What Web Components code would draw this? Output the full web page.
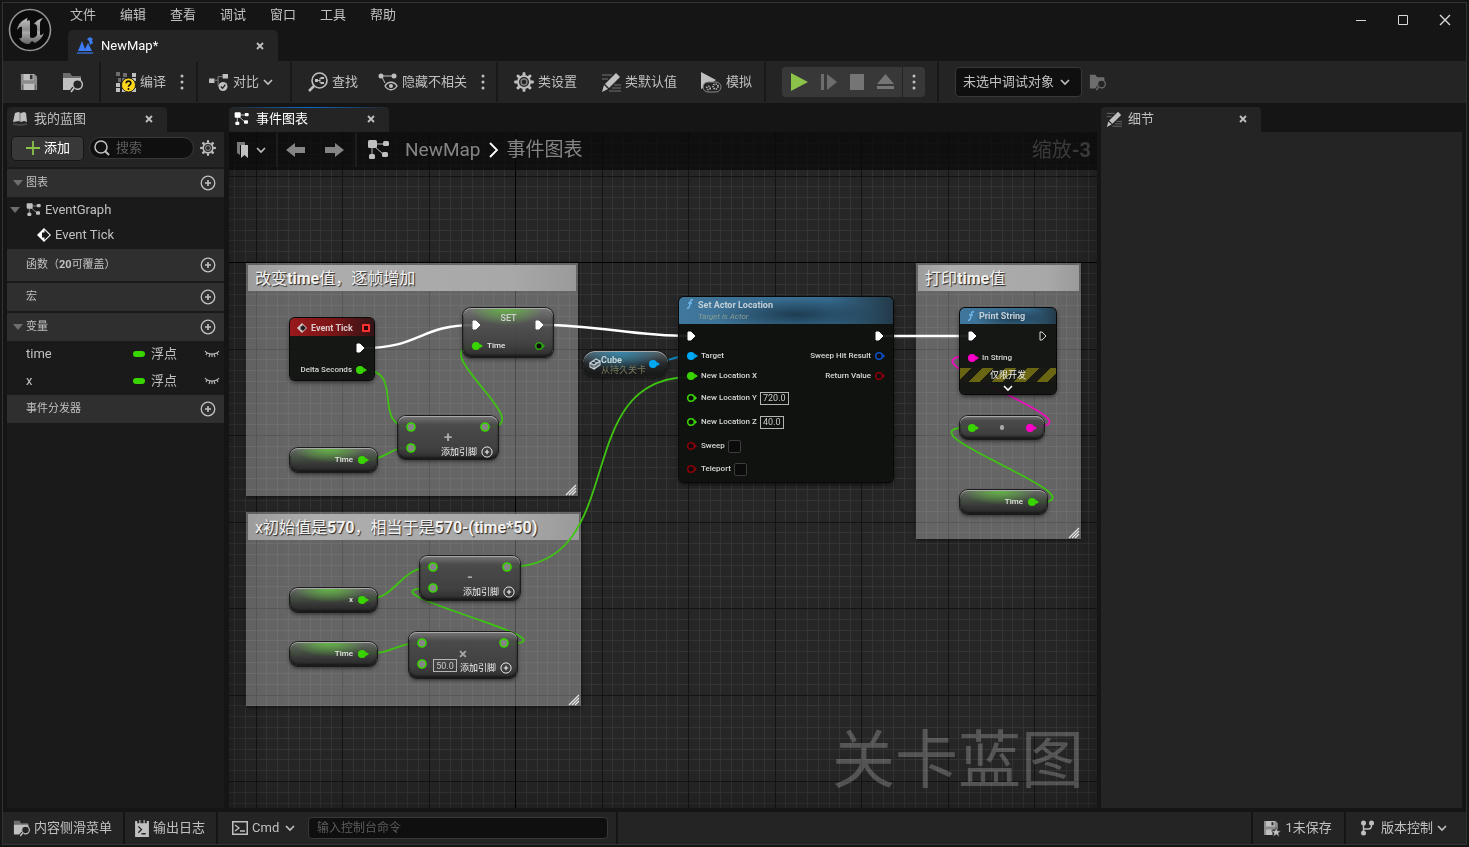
<!DOCTYPE html>
<html lang="zh-CN">
<head>
<meta charset="utf-8">
<title>NewMap - 关卡蓝图</title>
<style>
html,body{margin:0;height:100%}
body{background:#151515;color:#c0c0c0;font:13px/18px Roboto,"Noto Sans CJK SC",sans-serif}
</style>
</head>
<body>
<blueprint-editor></blueprint-editor>
<script>
const RESET = `
*{box-sizing:border-box}
button,input,select{font:inherit;color:inherit;margin:0;padding:0;border:0;background:none;outline:0;border-radius:0}
button{display:flex;align-items:center;white-space:nowrap}
select{appearance:none}
`;
function define(name, css, html, setup) {
  customElements.define(name, class extends HTMLElement {
    connectedCallback() {
      if (this.shadowRoot) return;
      const root = this.attachShadow({mode: 'open'});
      root.innerHTML = `<style>${RESET}${css}</style>` + (typeof html === 'function' ? html(this) : html);
      if (setup) setup(this, root);
    }
  });
}

/* ---------- icons: [width, height, markup] ---------- */
const gear = (cx, cy, r) => {
  let s = `<circle cx="${cx}" cy="${cy}" r="${r * .6}" fill="none" stroke="currentColor" stroke-width="${r * .2}"/><circle cx="${cx}" cy="${cy}" r="${r * .3}" fill="none" stroke="currentColor" stroke-opacity=".6" stroke-width="${r * .14}"/>`;
  for (let i = 0; i < 8; i++) s += `<path d="M${cx - r * .17} ${cy - r * .66}l${r * .05}-${r * .32}h${r * .24}l${r * .05} ${r * .32}z" fill="currentColor" transform="rotate(${i * 45} ${cx} ${cy})"/>`;
  return s;
};
const graphIcon = `<g fill="currentColor"><rect x="1" y="2" width="9" height="8" rx="1.5"/><rect x="16" y="3" width="6" height="5" rx="1.5"/><rect x="15" y="14" width="6" height="5" rx="1.5"/><rect x="2" y="16" width="6" height="5" rx="1.5"/></g><path d="M8 6h8M7 8l9 8M5 9v8" stroke="currentColor" stroke-width="1" fill="none"/>`;
const pencil = `<path d="M1 3h10M1 7h6M13 13h7M11 16h9M8 19h12" stroke="currentColor" stroke-opacity=".5" stroke-width="1"/><path d="M15 1l4 4L8 16 4 12z" fill="currentColor"/><path d="M3 13l4 4-6 3z" fill="currentColor"/>`;
const ICONS = {
  logo: [44, 44, `<defs><linearGradient id="g" x1="0" y1="0" x2="0" y2="1"><stop offset="0" stop-color="#c4c4c4"/><stop offset=".45" stop-color="#8b8b8b"/><stop offset=".55" stop-color="#aaa"/><stop offset="1" stop-color="#666"/></linearGradient></defs><circle cx="22" cy="22" r="20.5" fill="#0b0b0b" stroke="#8f9392" stroke-width="1.6"/><path d="M20 10c-6 2-10 6-11 12 2-3 4-4 5-3v9c0 2-1 3-3 2 2 4 6 6 10 6l3-3 3 2c4-2 7-5 9-10-2 2-4 3-4 1V15c0-2 2-4 3-5-4 1-7 3-9 6 2 0 3 1 3 3v8c-1 2-3 3-5 3-2 0-2-1-2-3V14c0-2-1-2-3-1 0-1 0-2 1-3z" fill="url(#g)"/>`],
  level: [18, 18, `<path d="M2 14L6 4l3 8 3-6 4 8z" fill="#3d7bf5"/><path d="M1 15h16v2H1z" fill="#2e569e"/><path d="M11 2l3-2 3 2-1 1 1 3-3 2-1-4z" fill="#3d7bf5"/>`],
  save: [20, 20, `<path d="M1 1h15l3 3v15H1z" fill="#8c8c8c"/><path d="M4 1h11v7H4zM4 12h12v7H4z" fill="currentColor"/><path d="M11 2h3v5h-3z" fill="#333"/><path d="M3 19v-6M17 19v-6" stroke="#555"/>`],
  browse: [21, 20, `<path d="M1 1h7l2 3h9v3H1z" fill="#6d6d6d"/><path d="M1 6h18v4a6 6 0 0 0-7 8H1z" fill="currentColor"/><circle cx="15.500" cy="12.500" r="4.800" fill="#242424" stroke="currentColor" stroke-width="1.500"/><path d="M12 16l-3 4" stroke="#242424" stroke-width="4"/><path d="M12.500 15.500L9 20" stroke="currentColor" stroke-width="1.800"/>`],
  compile: [20, 20, `<g fill="#c0c0c0"><path d="M0 11h4v4H0zM16 1h4v4h-4zM0 16h4v4H0zM6 16h4v4H6zM16 16h4v4h-4zM16 6h4v3h-4z"/></g><path d="M0 0h4v4H0zM7 1h4v4H7zM2 6h3v4H2zM6 6h4v4H6zM12 6h3v3h-3z" fill="#6d6d6d"/><circle cx="12.5" cy="13" r="7" fill="#ffd81a" stroke="#242424"/><path d="M10.200 11.300c0-3 4.600-3 4.600 0 0 1.600-2.300 1.600-2.300 3.400" stroke="#111" stroke-width="1.700" fill="none"/><circle cx="12.500" cy="17" r="1" fill="#111"/>`],
  dots: [4, 18, `<g fill="currentColor"><circle cx="2" cy="3" r="1.5"/><circle cx="2" cy="9" r="1.5"/><circle cx="2" cy="15" r="1.500"/></g>`],
  diff: [22, 20, `<path d="M0 6h6v5H0zM15 1h6v5h-6z" fill="currentColor"/><path d="M6 8h4V4h5M10 8v6h2" fill="none" stroke="#888"/><circle cx="15.500" cy="15" r="5" fill="currentColor"/><path d="M13 15l2 2 3-4" fill="none" stroke="#242424" stroke-width="1.500"/>`],
  find: [20, 20, `<circle cx="11.500" cy="8.500" r="7.500" fill="none" stroke="currentColor" stroke-width="1.600"/><path d="M6 14l-5 5" stroke="currentColor" stroke-width="2.500"/><path d="M7 7h3v3H7zM13 5h3v2h-3zM13 10h3v2h-3z" fill="currentColor"/><path d="M10 8.500h2M13 6h-1v5h1" stroke="currentColor" fill="none"/>`],
  hide: [20, 20, `<g fill="currentColor"><circle cx="3" cy="4" r="2.500"/><circle cx="16" cy="4" r="2.500"/></g><path d="M3 4h13M4 5l3 6" stroke="currentColor" fill="none"/><path d="M7 14c3-5 9-5 12 0-3 5-9 5-12 0z" fill="#242424" stroke="currentColor" stroke-width="1.400"/><circle cx="13" cy="14" r="2" fill="currentColor"/>`],
  gear: [20, 20, gear(10, 10, 10)],
  pencil: [20, 20, pencil],
  simulate: [21, 20, `<path d="M0 0l15 8-9 6-6 3z" fill="currentColor"/><rect x="2" y="10" width="18" height="10" rx="5" fill="#242424" stroke="#888"/><g fill="none" stroke="currentColor" stroke-width="1.600" stroke-dasharray="1.300 1"><circle cx="7.500" cy="16" r="1.700"/><circle cx="14.500" cy="14.500" r="2.500"/></g>`],
  play: [17, 18, `<path d="M0 0l17 9-17 9z" fill="#8bc24a"/>`],
  step: [16, 16, `<path d="M0 0h3v16H0zM6 0l10 8-10 8z" fill="#6d6d6d"/>`],
  stop: [14, 16, `<path d="M0 0h14v16H0z" fill="#757575"/>`],
  eject: [17, 16, `<path d="M8.500 0L17 10H0zM0 12h17v3H0z" fill="#757575"/>`],
  chevron: [10, 10, `<path d="M1 3l4 4 4-4" fill="none" stroke="currentColor" stroke-width="1.600"/>`],
  chevronRight: [10, 16, `<path d="M1 1l7 7-7 7" fill="none" stroke="currentColor" stroke-width="1.800"/>`],
  close: [10, 10, `<path d="M2 2l6 6M8 2L2 8" stroke="currentColor" stroke-width="1.800"/>`],
  winMin: [12, 12, `<path d="M1 6.500h10" stroke="currentColor"/>`],
  winMax: [12, 12, `<path d="M1.500 1.500h9v9h-9z" fill="none" stroke="currentColor"/>`],
  winClose: [12, 12, `<path d="M1 1l10 10M11 1L1 11" stroke="currentColor" stroke-width="1.400"/>`],
  book: [16, 16, `<path d="M3 2l3-1 3 1 3-1 2 1 1 9-3-1-3 1-2-1-6 1z" fill="currentColor"/><path d="M1 12l7 1 7-1v2l-7 1-7-1z" fill="#444"/><path d="M8 2v9" stroke="#777"/>`],
  graph: [24, 24, graphIcon],
  plus: [14, 14, `<path d="M7 0v14M0 7h14" stroke="#8bc24a" stroke-width="1.800"/>`],
  search: [16, 16, `<circle cx="7" cy="7" r="6" fill="none" stroke="currentColor" stroke-width="1.500"/><path d="M11 11l4 4" stroke="currentColor" stroke-width="2"/>`],
  arrow: [10, 6, `<path d="M0 0h10L5 6z" fill="#6d6d6d"/>`],
  add: [16, 16, `<circle cx="8" cy="8" r="6.800" fill="none" stroke="currentColor" stroke-width="1.300"/><path d="M8 5v6M5 8h6" stroke="currentColor" stroke-width="1.600"/>`],
  event: [14, 14, `<path d="M7 0l7 7-7 7-7-7z" fill="currentColor"/><path d="M7.500 2L12.500 7l-5 5V9.500H5v-5h2.500z" fill="#1a1a1a"/>`],
  eye: [16, 8, `<path d="M1 1c3 4 11 4 14 0M3 3L2 5M6 4L5 7M8 4v3M10 4l1 3M13 3l1 2" fill="none" stroke="currentColor" stroke-width="1.100"/>`],
  bookmark: [14, 16, `<path d="M1 0h8v3H4v10l-3-2z" fill="#7a7a7a"/><path d="M5 3h7v13l-3.500-3L5 16z" fill="currentColor"/>`],
  back: [20, 16, `<path d="M0 8l9-7v4h10v6H9v4z" fill="#858585"/>`],
  forward: [20, 16, `<path d="M20 8l-9-7v4H1v6h10v4z" fill="#858585"/>`],
  log: [13, 16, `<path d="M0 1h2v2h2V0h1v3h3V0h1v3h2V1h2v15H0z" fill="currentColor"/><path d="M3 6l3 3-3 3M6 13h4" fill="none" stroke="#242424" stroke-width="1.300"/>`],
  cmd: [16, 14, `<path d="M.750.750h14.500v12.500H.750z" fill="none" stroke="currentColor" stroke-width="1.500"/><path d="M3 4l4 3-4 3M8 10h5" fill="none" stroke="currentColor" stroke-width="1.300"/>`],
  unsaved: [16, 16, `<path d="M0 1h11l2 2v6H0zM0 9h7v5H0z" fill="#8c8c8c"/><path d="M2 1h8v5H2zM2 9h6v5H2z" fill="currentColor"/><path d="M7 2h2v3H7z" fill="#333"/><path d="M11.500 7l1.300 3.200 3.200.1-2.500 2 1 3.400-3-2-3 2 1-3.400-2.500-2 3.200-.1z" fill="currentColor" stroke="#242424" stroke-width=".500"/>`],
  branch: [13, 16, `<g fill="currentColor"><circle cx="2.500" cy="3" r="2.500"/><circle cx="10.500" cy="3" r="2.500"/><circle cx="2.500" cy="13" r="2.500"/></g><path d="M2.500 3v10M2.500 9h5c2 0 3-1 3-4" fill="none" stroke="currentColor" stroke-width="1.400"/>`],
  func: [8, 10, `<path d="M7 1C4 0 4.500 3 4 5S3 10 1 9M2 4h4" fill="none" stroke="#6fb7ea" stroke-width="1.400"/>`],
  cube: [12, 12, `<path d="M1 5l6-4 4 2-6 4zM1 5v4l4 2V7M5 11l6-4V3" fill="none" stroke="#c8d4da" stroke-width="1.200"/><path d="M3 6v4M7 6v4M9 4v4M4 3l4 2" stroke="#c8d4da" stroke-width=".800"/>`],
  grip: [10, 10, `<path d="M0 10L10 0M3 10l7-7M6 10l4-4" stroke="#e6e6e6" stroke-width="1.300"/>`],
};
define('ue-icon', `:host{display:inline-flex;flex:none}svg{display:block;overflow:visible}`, el => {
  const [w, h, m] = ICONS[el.getAttribute('name')];
  const W = el.getAttribute('size') || w;
  return `<svg width="${W}" height="${Math.round(W * h / w)}" viewBox="0 0 ${w} ${h}" aria-hidden="true">${m}</svg>`;
});

/* ---------- shared controls ---------- */
define('tool-button', `:host{display:flex;flex:none}button{gap:4px;height:30px}button.bare{gap:0}`, el => {
  const label = el.getAttribute('label');
  return `<button ${label ? `class="bare" aria-label="${label}"` : ''}><ue-icon name="${el.getAttribute('icon')}" ${el.hasAttribute('size') ? `size="${el.getAttribute('size')}"` : ''}></ue-icon><slot></slot></button>`;
});
define('panel-tab', `
:host{display:flex;align-items:center;width:160px;height:25px;padding:0 13px 2px 5px;background:#242424;border-radius:4px 4px 0 0;color:#c0c0c0}
:host([active]){color:#fff;background:linear-gradient(90deg,#242424,#0b6bcb,#242424) top/100% 1px no-repeat #242424}
:host([document]){width:210px;height:31px;padding:0 13px 0 8px;color:#fff;border-radius:5px 5px 0 0}
.name{flex:1;gap:6px;text-align:left}
:host([document]) .name{gap:7px}
.x{color:#c0c0c0}`,
  el => `<button class="name" role="tab"><ue-icon name="${el.getAttribute('icon')}" size="${el.getAttribute('size') || 16}"></ue-icon><slot></slot></button><button class="x" aria-label="关闭"><ue-icon name="close"></ue-icon></button>`);

/* ---------- title bar ---------- */
define('title-bar', `
:host{display:flex;height:58px;color:#c0c0c0;padding-left:5px}
.brand{padding-top:5px;width:60px}
.mid{flex:1;display:flex;flex-direction:column;justify-content:space-between}
nav{display:flex;gap:24px;padding:3px 0 0 2px}
.win{display:flex;gap:30px;align-items:flex-start;padding:11px 15px 0 0;color:#d8d8d8}`, `
<div class="brand"><ue-icon name="logo"></ue-icon></div>
<div class="mid"><nav>${['文件', '编辑', '查看', '调试', '窗口', '工具', '帮助'].map(t => `<button>${t}</button>`).join('')}</nav>
<panel-tab document icon="level" size="18">NewMap*</panel-tab></div>
<div class="win"><button aria-label="最小化"><ue-icon name="winMin"></ue-icon></button><button aria-label="最大化"><ue-icon name="winMax"></ue-icon></button><button aria-label="关闭"><ue-icon name="winClose"></ue-icon></button></div>`);

/* ---------- main toolbar ---------- */
define('tool-group', `:host{display:flex;align-items:center;height:40px;padding:0 12px 0 16px;border-right:2px solid #181818}:host(:last-of-type){border:0}`, `<slot></slot>`);
define('main-toolbar', `
:host{display:flex;align-items:center;height:42px;background:#242424}
.file{gap:24px;padding:0 16px 0 17px}
.compile{gap:14px;padding-left:15px}
.diff{padding:0 17px 0 11px}
.search{gap:20px;padding-right:11px}
.search .opts{margin-left:-6px}
.wide{gap:24px}
.target{gap:7px}
.play{display:flex;height:30px;background:#383838;border-radius:4px;align-items:center}
.run{display:flex;gap:13px;padding:0 8px 0 9px;border-right:1px solid #242424;height:30px}
.more{padding:0 9px}
.debug{display:flex;align-items:center;height:30px;width:127px;background:#0f0f0f;border:1px solid #383838;border-radius:4px;padding:0 11px 0 7px}
.debug select{flex:1}`, `
<tool-group class="file"><tool-button icon="save" label="保存" size="18"></tool-button><tool-button icon="browse" label="浏览"></tool-button></tool-group>
<tool-group class="compile"><tool-button icon="compile">编译</tool-button><tool-button icon="dots" label="编译选项"></tool-button></tool-group>
<tool-group class="diff"><tool-button icon="diff" size="20">对比<ue-icon name="chevron"></ue-icon></tool-button></tool-group>
<tool-group class="search"><tool-button icon="find">查找</tool-button><tool-button icon="hide">隐藏不相关</tool-button><tool-button class="opts" icon="dots" label="更多"></tool-button></tool-group>
<tool-group class="wide"><tool-button icon="gear">类设置</tool-button><tool-button icon="pencil">类默认值</tool-button><tool-button icon="simulate">模拟</tool-button></tool-group>
<tool-group><div class="play"><div class="run"><tool-button icon="play" label="运行"></tool-button><tool-button icon="step" label="步进"></tool-button><tool-button icon="stop" label="停止"></tool-button><tool-button icon="eject" label="弹出"></tool-button></div><tool-button class="more" icon="dots" label="运行选项"></tool-button></div></tool-group>
<tool-group class="target"><div class="debug"><select aria-label="调试对象"><option>未选中调试对象</option></select><ue-icon name="chevron"></ue-icon></div><tool-button icon="browse" size="17" label="浏览调试对象" style="color:#6d6d6d"></tool-button></tool-group>`);

/* ---------- my blueprint panel ---------- */
define('tree-section', `
:host{display:flex;align-items:center;height:28px;padding:0 8px 0 6px;background:#2f2f2f;font-size:11px;margin-top:2px}
:host([tall]){height:32px;margin:0}
.a{width:13px;display:flex}.t{flex:1}`,
  el => `<div class="a">${el.hasAttribute('open') ? '<ue-icon name="arrow"></ue-icon>' : ''}</div><div class="t"><slot></slot></div><button aria-label="添加"><ue-icon name="add"></ue-icon></button>`);
define('variable-row', `
:host{display:flex;align-items:center;height:27px;padding:0 4px 2px 19px}
.n{flex:1}.p{width:12px;height:6px;border-radius:3px;background:#38d500;margin-right:6px}.y{width:53px}`,
  `<span class="n"><slot></slot></span><span class="p"></span><span class="y">浮点</span><button aria-label="切换可见性"><ue-icon name="eye"></ue-icon></button>`);
define('blueprint-panel', `
:host{display:flex;flex-direction:column;padding-right:1px}
.body{flex:1;background:#1a1a1a}
.find{display:flex;align-items:center;height:35px;background:#242424;padding:0 8px 3px 5px}
.add{height:23px;width:71px;background:#383838;border-radius:4px;gap:4px;padding-left:14px;color:#fff;box-shadow:0 0 0 1px #161616;margin-right:6px}
label{display:flex;align-items:center;gap:6px;height:22px;width:105px;border:1px solid #383838;background:#0f0f0f;border-radius:11px;padding:0 4px;margin-right:6px}
input{width:60px}input::placeholder{color:#5c5c5c;opacity:1}
.tree{display:flex;align-items:center;height:26px;gap:3px;padding-left:3px}
.tree .i{display:flex;width:16px;justify-content:center;margin-left:3px}
.leaf{padding:0 0 2px 30px;gap:4px;color:#c0c0c0}.leaf ue-icon{color:#fff}
b{font-weight:700}`, `
<panel-tab icon="book">我的蓝图</panel-tab>
<div class="body">
<div class="find"><button class="add"><ue-icon name="plus"></ue-icon>添加</button><label><ue-icon name="search"></ue-icon><input type="search" placeholder="搜索" aria-label="搜索"></label><tool-button icon="gear" size="16" label="设置"></tool-button></div>
<tree-section open>图表</tree-section>
<div class="tree"><ue-icon name="arrow"></ue-icon><span class="i"><ue-icon name="graph" size="16"></ue-icon></span>EventGraph</div>
<div class="tree leaf"><ue-icon name="event"></ue-icon>Event Tick</div>
<tree-section tall>函数（<b>20</b>可覆盖）</tree-section>
<tree-section>宏</tree-section>
<tree-section open>变量</tree-section>
<variable-row>time</variable-row><variable-row>x</variable-row>
<tree-section style="margin:0">事件分发器</tree-section>
</div>`);

/* ---------- graph canvas pieces ---------- */
const place = el => {
  for (const [a, p] of [['x', 'left'], ['y', 'top'], ['w', 'width'], ['h', 'height']]) el.style[p] = el.getAttribute(a) + 'px';
};
const PIN = {green: '#38d500', darkgreen: '#2aa310', blue: '#00a8f4', navy: '#0b4fc4', red: '#8a0008', pink: '#ff00c8'};
define('node-pin', `:host{display:inline-flex;flex:none}svg{display:block}`, el => {
  const k = el.getAttribute('kind') || 'fill', c = PIN[el.getAttribute('color')] || '#fff';
  const shape = {
    exec: `<path d="M2 2h3l4 4-4 4H2z" fill="#fff" stroke="#fff" stroke-linejoin="round"/>`,
    execEmpty: `<path d="M3 2h2l4 4-4 4H3z" fill="none" stroke="#ddd" stroke-linejoin="round"/>`,
    fill: `<circle cx="5" cy="6" r="4" fill="${c}"/><path d="M9 4l3 2-3 2z" fill="${c}"/>`,
    ring: `<circle cx="5" cy="6" r="3.300" fill="#0c0d0c" stroke="${c}" stroke-width="1.600"/><path d="M9 4l2 2-2 2z" fill="${c}"/>`,
    wild: `<circle cx="6" cy="6" r="4" fill="#868686" stroke="${c}" stroke-width="1.600"/>`,
  }[k];
  return `<svg width="12" height="12" viewBox="0 0 12 12" aria-hidden="true">${shape}</svg>`;
});
define('graph-comment', `
:host{position:absolute;background:rgba(255,255,255,.29);padding:2px;box-shadow:0 1px 4px rgba(0,0,0,.6)}
h2{margin:0;height:26px;padding:1px 0 0 7px;font-size:16px;line-height:26px;font-weight:400;background:linear-gradient(90deg,#9c9c9c,#adadad 20%,#a8a8a8 80%,#9a9a9a);color:#f2f2f2;text-shadow:1px 1px 1px #222;white-space:nowrap}
ue-icon{position:absolute;right:2px;bottom:1px}`, `<h2><slot></slot></h2><ue-icon name="grip"></ue-icon>`, place);

/* node with a coloured title and rows of pins */
define('title-node', `
:host{position:absolute;border-radius:5px;background:rgba(14,17,14,.93);box-shadow:0 0 0 1px #080808,0 2px 5px rgba(0,0,0,.7);overflow:hidden;font-size:8px;line-height:12px;color:#d8d8d8}
header{display:flex;align-items:center;gap:4px;height:16px;padding:0 4px 0 7px;font-size:9px;font-weight:700;color:#c3cfd6;background:radial-gradient(ellipse 40% 60% at 55% 65%,#1e3d52,transparent),linear-gradient(90deg,#40779c,#35698c 70%,#233a49)}
:host([event]) header{height:18px;padding-top:2px;background:linear-gradient(90deg,#98191b,#7c1517 50%,#331416);color:#d8c8c8}
:host([sub]) header{height:27px;align-items:flex-start;padding-top:2px}
.s{font-size:8px;font-style:italic;font-weight:400;color:#8a9d92}
.s.hide{display:none}
.t{flex:1;white-space:nowrap}
i.d{width:8px;height:8px;border:2px solid #f33;border-radius:1px;background:#300}`,
  el => `<header><ue-icon name="${el.hasAttribute('event') ? 'event' : 'func'}" size="${el.hasAttribute('event') ? 10 : 8}"></ue-icon><div class="t">${el.getAttribute('name')}<div class="s${el.hasAttribute('sub') ? '' : ' hide'}">${el.getAttribute('sub') || ''}</div></div>${el.hasAttribute('event') ? '<i class="d"></i>' : ''}</header><slot></slot>`, place);
define('pin-row', `
:host{display:flex;align-items:center;justify-content:space-between;height:20px;padding:0 7px;font-size:8px;line-height:12px;font-weight:500;white-space:nowrap}
::slotted(*){display:flex;align-items:center;gap:3px}`, `<slot></slot>`);
define('number-field', `:host{display:inline-flex}input{width:100%;height:13px;border:1px solid #b5b5b5;font-size:9px;line-height:11px;font-weight:400;text-align:center;color:#c8c8c8}`,
  el => `<input aria-label="${el.getAttribute('label')}" value="${el.getAttribute('value')}">`);
define('check-field', `:host{display:inline-flex}input{appearance:none;width:13px;height:13px;border:1px solid #3c3c3c;border-radius:2px;background:#0b0b0b}`,
  el => `<input type="checkbox" aria-label="${el.getAttribute('label')}">`);

/* compact glossy node: variables, setters and operators */
define('glossy-node', `
:host{position:absolute;display:flex;border-radius:8px;background:linear-gradient(rgba(120,120,120,.9),rgba(70,70,70,.86) 20%,rgba(58,58,58,.86) 75%,rgba(40,40,40,.92));box-shadow:0 0 0 1px #1c1c1c,inset 0 1px 0 #a9a9a9,inset 0 -2px 2px #1a1a1a,0 2px 4px rgba(0,0,0,.6);font-size:8px;line-height:12px;font-weight:500;color:#e4e4e4}
:host([var]){background:radial-gradient(ellipse 42% 60% at 45% 0,rgba(100,195,65,.9),transparent),linear-gradient(rgba(105,105,105,.9),rgba(66,78,62,.9) 40%,rgba(48,48,48,.9) 70%,rgba(35,35,35,.95));align-items:center;justify-content:flex-end;gap:4px;padding-right:8px}
:host([set]){background:radial-gradient(ellipse 42% 36% at 48% 0,rgba(100,185,65,.9),transparent),linear-gradient(rgba(120,120,120,.9),rgba(80,80,80,.86) 30%,rgba(60,60,60,.88) 75%,rgba(40,40,40,.92))}
:host([actor]){background:radial-gradient(ellipse 50% 80% at 45% 0,rgba(50,140,180,.9),transparent),linear-gradient(#5d6568,#262a2c 50%,#151515);justify-content:flex-start;gap:0;padding:0 8px 0 6px;border-radius:12px}`, `<slot></slot>`, place);
define('operator-body', `
:host{flex:1;display:flex;flex-direction:column;justify-content:flex-start;padding:0 7px}
div{display:flex;align-items:center;justify-content:space-between;height:21px}
.f{display:flex;align-items:flex-end;font-size:9px;font-weight:400;height:21px;margin-right:-2px}
button{gap:4px;line-height:12px;color:#ededed}
.sym{position:absolute;left:50%;top:50%;width:20px;margin:-10px 0 0 -10px;height:20px;line-height:18px;text-align:center;font-size:15px;font-weight:700;color:#a8a8a8;display:block}
number-field{width:24px;margin:0 3px 2px 0}`,
  el => `<div><node-pin kind="wild" color="green"></node-pin><node-pin kind="wild" color="green"></node-pin></div>
<div><node-pin kind="wild" color="green"></node-pin><span class="f">${el.hasAttribute('value') ? `<number-field label="值" value="${el.getAttribute('value')}"></number-field>` : ''}<button>添加引脚<ue-icon name="add" size="12"></ue-icon></button></span></div>
<span class="sym">${el.getAttribute('op')}</span>`);
define('set-body', `
:host{flex:1;display:flex;flex-direction:column;padding:6px 7px 0 8px}
div{display:flex;align-items:center;justify-content:space-between;height:21px}
span{display:flex;align-items:center;gap:4px}
b{align-self:flex-start;line-height:8px;font-size:9px;font-weight:500;color:#d0d0d0}`,
  `<div><node-pin kind="exec"></node-pin><b>SET</b><node-pin kind="exec"></node-pin></div><div><span><node-pin color="green"></node-pin>Time</span><node-pin kind="ring" color="darkgreen"></node-pin></div>`);

define('graph-grid', `:host{position:absolute;inset:0;overflow:hidden}svg{display:block}`, () => {
  let minor = '', major = '';
  const step = 86.5, cols = 44, rows = 24;
  for (let i = -32; i < cols * 8; i++) {
    const p = Math.round(286 + i * step / 8) + .5;
    if (i % 8) minor += `M${p} 0V2000`; else major += `M${p} 0V2000`;
  }
  for (let i = -16; i < rows * 8; i++) {
    const p = Math.round(130 + i * step / 8) + .5;
    if (i % 8) minor += `M0 ${p}H4000`; else major += `M0 ${p}H4000`;
  }
  return `<svg width="4000" height="2000" fill="none"><path d="${minor}" stroke="#343434"/><path d="${major}" stroke="#141414"/><path d="M286.500 0V2000M0 130.500H4000" stroke="#000"/></svg>`;
});
define('graph-wires', `:host{position:absolute;inset:0}svg{display:block;overflow:visible}`, `
<svg width="100%" height="100%" fill="none" stroke-width="1.800"><g transform="translate(-229 -132)">
<g stroke="#fff" stroke-width="2.500"><path d="M364 348C420 348 420 325 474 325"/><path d="M542 325C600 325 632 336 688 336"/><path d="M884 336H968"/></g>
<g stroke="#3fc312"><path d="M364 370C406 370 370 427 411 427"/><path d="M364 460C388 460 388 447 411 447"/><path d="M488 427C542 427 420 346 476 346"/><path d="M508 567C632 567 567 377 690 377"/><path d="M364 600C398 600 398 567 432 567"/><path d="M504 644C594 644 342 588 432 588"/><path d="M364 654C394 654 394 643 422 643"/><path d="M1032 503C1122 503 882 427 972 427"/></g>
<path d="M655 362C672 362 670 356 690 356" stroke="#0d86c0"/><path d="M1030 427C1116 427 886 356 972 356" stroke="#f20cc0"/></g></svg>`);

define('graph-header', `
:host{position:absolute;left:0;right:0;top:0;height:38px;display:flex;align-items:center;padding-bottom:2px;background:rgba(8,8,8,.72);font-size:19px;line-height:28px;color:#858585}
.g{display:flex;align-items:center;height:34px;border-right:2px solid #1d1d1d;color:#c0c0c0}
.b{padding:0 10px 0 7px;width:49px}.b button{gap:6px}
.n{gap:18px;padding:0 11px 0 8px}
.crumb{display:flex;align-items:center;gap:8px;padding-left:10px;flex:1}
.crumb ue-icon:first-child{color:#c0c0c0;margin-right:6px}
.crumb ue-icon{color:#fff}
.zoom{font-size:20px;color:#3a3a3a;padding-right:6px}b{font-weight:700}`, `
<div class="g b"><button aria-label="书签"><ue-icon name="bookmark"></ue-icon><ue-icon name="chevron" size="10"></ue-icon></button></div>
<div class="g n"><button aria-label="后退"><ue-icon name="back"></ue-icon></button><button aria-label="前进"><ue-icon name="forward"></ue-icon></button></div>
<div class="crumb"><ue-icon name="graph"></ue-icon><button>NewMap</button><ue-icon name="chevronRight"></ue-icon><span>事件图表</span></div>
<div class="zoom">缩放<b>-3</b></div>`);

define('event-graph', `
:host{display:flex;flex-direction:column;min-width:0}
.view{position:relative;flex:1;background:#262626;overflow:hidden}
.shade{position:absolute;inset:0;box-shadow:inset 0 0 50px rgba(0,0,0,.35)}
.mark{position:absolute;right:13px;bottom:1px;font-size:63px;line-height:92px;color:rgba(255,255,255,.22);white-space:nowrap}
.dev{display:flex;align-items:center;justify-content:center;height:14px;margin:0;font-size:9px;color:#eee;background:repeating-linear-gradient(135deg,#6a6512 0 8px,#191a12 8px 16px)}
.more{display:flex;margin:auto;height:12px;color:#fff}
.dot{width:4px;height:5px;border-radius:2px;background:#aaa}
.gap{height:2px}
.h25{height:24px}.end{height:22px}
number-field{width:29px}.z{width:24px}
.cube{flex:1;font-size:9px;line-height:10px;padding-top:2px;font-weight:700;color:#c5d5da}
.cube small{display:block;font-size:9px;line-height:10px;font-weight:400;color:#77785c;white-space:nowrap}
b{font-weight:700}`, `
<panel-tab active icon="graph">事件图表</panel-tab>
<div class="view"><graph-grid></graph-grid><div class="shade"></div>
<graph-comment x="17" y="131" w="332" h="233">改变<b>time</b>值，逐帧增加</graph-comment>
<graph-comment x="17" y="380" w="335" h="194">x初始值是<b>570</b>，相当于是<b>570-(time*50)</b></graph-comment>
<graph-comment x="687" y="131" w="165" h="276">打印<b>time</b>值</graph-comment>
<div class="mark">关卡蓝图</div>
<graph-wires></graph-wires>
<title-node event name="Event Tick" x="61" y="186" w="84" h="62">
<pin-row class="h25"><span></span><span><node-pin kind="exec"></node-pin></span></pin-row>
<pin-row><span></span><span>Delta Seconds<node-pin color="green"></node-pin></span></pin-row></title-node>
<glossy-node set x="234" y="176" w="90" h="49"><set-body></set-body></glossy-node>
<glossy-node x="169" y="284" w="100" h="43"><operator-body op="+"></operator-body></glossy-node>
<glossy-node var x="61" y="316" w="87" h="24">Time<node-pin color="green"></node-pin></glossy-node>
<glossy-node x="191" y="424" w="100" h="44"><operator-body op="-"></operator-body></glossy-node>
<glossy-node var x="61" y="456" w="87" h="24">x<node-pin color="green"></node-pin></glossy-node>
<glossy-node var x="61" y="510" w="87" h="24">Time<node-pin color="green"></node-pin></glossy-node>
<glossy-node x="180" y="500" w="108" h="46"><operator-body op="×" value="50.0"></operator-body></glossy-node>
<glossy-node var actor x="354" y="219" w="85" h="25"><ue-icon name="cube"></ue-icon><span class="cube">Cube<small>从持久关卡</small></span><node-pin color="blue"></node-pin></glossy-node>
<title-node name="Set Actor Location" sub="Target is Actor" x="450" y="165" w="214" h="185">
<div class="gap"></div>
<pin-row><span><node-pin kind="exec"></node-pin></span><span><node-pin kind="exec"></node-pin></span></pin-row>
<pin-row><span><node-pin color="blue"></node-pin>Target</span><span>Sweep Hit Result<node-pin kind="ring" color="navy"></node-pin></span></pin-row>
<pin-row><span><node-pin color="green"></node-pin>New Location X</span><span>Return Value<node-pin kind="ring" color="red"></node-pin></span></pin-row>
<pin-row class="h25"><span><node-pin kind="ring" color="green"></node-pin>New Location Y<number-field label="New Location Y" value="720.0"></number-field></span></pin-row>
<pin-row class="h25"><span><node-pin kind="ring" color="green"></node-pin>New Location Z<number-field class="z" label="New Location Z" value="40.0"></number-field></span></pin-row>
<pin-row class="h25"><span><node-pin kind="ring" color="red"></node-pin>Sweep<check-field label="Sweep"></check-field></span></pin-row>
<pin-row class="end"><span><node-pin kind="ring" color="red"></node-pin>Teleport<check-field label="Teleport"></check-field></span></pin-row></title-node>
<title-node name="Print String" x="731" y="176" w="96" h="86">
<pin-row class="h25"><span><node-pin kind="exec"></node-pin></span><span><node-pin kind="execEmpty"></node-pin></span></pin-row>
<pin-row><span><node-pin color="pink"></node-pin>In String</span></pin-row>
<div class="dev">仅限开发</div><button class="more" aria-label="展开"><ue-icon name="chevron"></ue-icon></button></title-node>
<glossy-node x="731" y="284" w="84" h="23" style="align-items:center;justify-content:space-between;padding:0 7px"><node-pin color="green"></node-pin><span class="dot"></span><node-pin color="pink"></node-pin></glossy-node>
<glossy-node var x="731" y="358" w="87" h="24">Time<node-pin color="green"></node-pin></glossy-node>
<graph-header></graph-header>
</div>`);

define('details-panel', `:host{display:flex;flex-direction:column}.body{flex:1;background:#242424}`, `<panel-tab icon="pencil">细节</panel-tab><div class="body"></div>`);

define('status-bar', `
:host{display:flex;height:32px;background:#242424}
tool-button{align-items:center;height:32px;border-right:2px solid #151515;padding:0 11px 0 10px}
.cmd{display:flex;align-items:center;gap:4px;padding:0 8px 0 14px;border-right:2px solid #151515}
.cmd select{width:29px}
.cmd input{width:300px;height:22px;margin-left:9px;padding:0 8px;background:#0f0f0f;border:1px solid #383838;border-radius:4px;font-size:12px}
input::placeholder{color:#5c5c5c;opacity:1}
.space{flex:1;border-right:2px solid #151515}
.unsaved{padding:0 12px 0 11px}
.vc{border:0;padding:0 19px 0 15px}`, `
<tool-button icon="browse" size="17">内容侧滑菜单</tool-button>
<tool-button icon="log" size="14">输出日志</tool-button>
<div class="cmd"><ue-icon name="cmd"></ue-icon><select aria-label="控制台类型"><option>Cmd</option></select><ue-icon name="chevron"></ue-icon><input placeholder="输入控制台命令" aria-label="输入控制台命令"></div>
<div class="space"></div>
<tool-button class="unsaved" icon="unsaved" size="17">1未保存</tool-button>
<tool-button class="vc" icon="branch">&nbsp;版本控制<ue-icon name="chevron"></ue-icon></tool-button>`);

define('blueprint-editor', `
:host{box-sizing:border-box;position:fixed;inset:0;display:flex;flex-direction:column;height:calc(100vh - 4px);margin:2px;border:1px solid #333;overflow:hidden}
main{flex:1;display:grid;grid-template-columns:218px minmax(0,1fr) 361px;gap:4px;padding:4px;min-height:0}`, `
<title-bar></title-bar><main-toolbar></main-toolbar>
<main><blueprint-panel></blueprint-panel><event-graph></event-graph><details-panel></details-panel></main>
<status-bar></status-bar>`);
</script>
</body>
</html>
